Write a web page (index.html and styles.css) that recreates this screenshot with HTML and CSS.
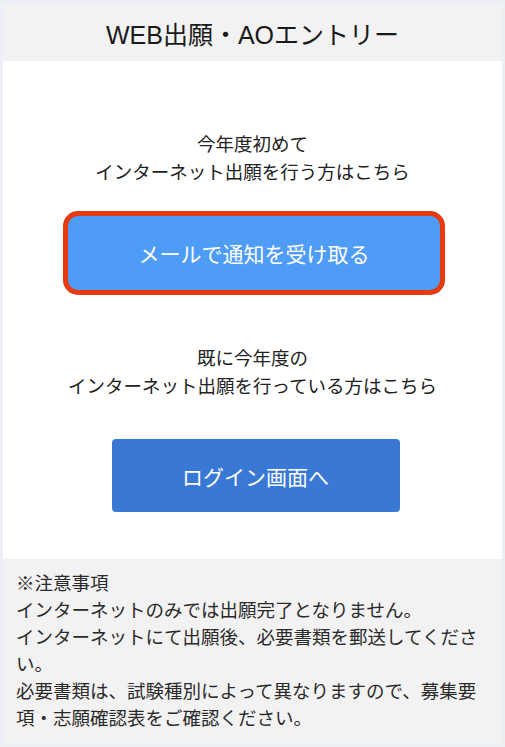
FILE: index.html
```html
<!DOCTYPE html>
<html lang="ja">
<head>
  <meta charset="UTF-8" />
  <meta name="viewport" content="width=device-width, initial-scale=1.0"/>
  <title>WEB出願・AOエントリー</title>
  <link rel="stylesheet" href="styles.css">
</head>
<body>
  <div class="frame">
    <header class="entry-header">
      <h1>WEB出願・AOエントリー</h1>
    </header>

    <section class="entry-body">
      <p class="lead">今年度初めて<br>インターネット出願を行う方はこちら</p>
      <a href="#mail" class="btn btn-mail">メールで通知を受け取る</a>

      <p class="lead lead-second">既に今年度の<br>インターネット出願を行っている方はこちら</p>
      <a href="#login" class="btn btn-login">ログイン画面へ</a>
    </section>

    <section class="notes">
      <p>※注意事項</p>
      <p>インターネットのみでは出願完了となりません。</p>
      <p>インターネットにて出願後、必要書類を郵送してください。</p>
      <p>必要書類は、試験種別によって異なりますので、募集要項・志願確認表をご確認ください。</p>
    </section>
  </div>
</body>
</html>
```

FILE: styles.css
```css
:root {
  --frame: #eceff3;
  --panel: #f2f2f2;
  --white: #fff;
  --text: #222;
  --mail-blue: #4f9cf6;
  --mail-border: #e63a10;
  --login-blue: #3a78d5;
}

* {
  box-sizing: border-box;
  margin: 0;
  padding: 0;
}

body {
  font-family: "Noto Sans CJK JP", "Noto Sans", sans-serif;
  background: var(--frame);
  color: var(--text);
}

.frame {
  width: 505px;
  height: 747px;
  padding: 4px 3px 3px;
  display: flex;
  flex-direction: column;
}

.entry-header {
  background: var(--panel);
  height: 57px;
  display: flex;
  align-items: center;
  justify-content: center;
}

.entry-header h1 {
  font-family: "Liberation Sans", "Noto Sans CJK JP", sans-serif;
  font-size: 25px;
  font-weight: 400;
  color: #1a1a1a;
}

.entry-body {
  background: var(--white);
  padding: 68px 0 47px;
  display: flex;
  flex-direction: column;
  align-items: center;
}

.lead {
  font-size: 18.5px;
  line-height: 28px;
  text-align: center;
}

.lead-second {
  margin-top: 48px;
}

.btn {
  display: flex;
  align-items: center;
  justify-content: center;
  color: var(--white);
  text-decoration: none;
  font-size: 21px;
}

.btn-mail {
  width: 382px;
  height: 84px;
  margin-top: 26px;
  margin-left: 3px;
  background: var(--mail-blue);
  border: 5px solid var(--mail-border);
  border-radius: 15px;
}

.btn-login {
  width: 288px;
  height: 73px;
  margin-top: 40px;
  margin-left: 6px;
  background: var(--login-blue);
  border-radius: 4px;
}

.notes {
  flex: 1;
  background: var(--panel);
  padding: 10px 16px 12px 13px;
  font-size: 18.5px;
  line-height: 27px;
  color: #2a2a2a;
}
```
